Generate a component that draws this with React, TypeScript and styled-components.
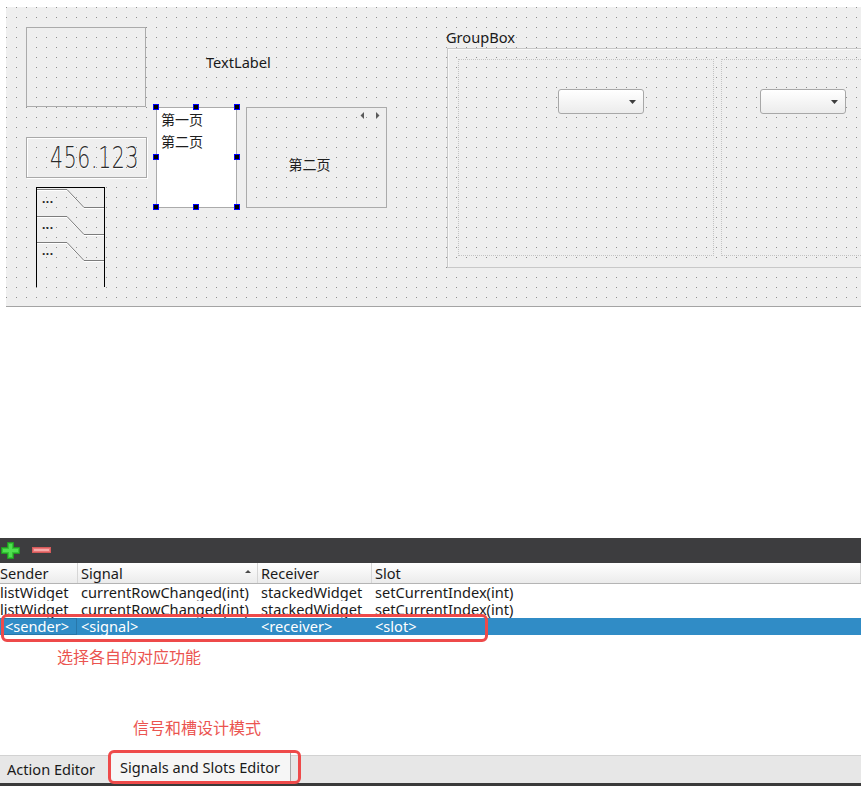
import React from "react";
import styled, { createGlobalStyle } from "styled-components";

const UI = `"Noto Sans", "Noto Sans CJK SC", sans-serif`;
const CJK = `"Noto Sans CJK SC", "Noto Sans", sans-serif`;
const RED = "#ee4a4a";
const FS = "14.6px";

const GlobalStyle = createGlobalStyle`
  html, body { margin: 0; padding: 0; background: #ffffff; }
  body { font-family: ${UI}; font-size: ${FS}; color: #1e1e1e; }
  * { box-sizing: border-box; }
`;

const Root = styled.div`
  position: relative;
  width: 861px;
  height: 786px;
  overflow: hidden;
  display: flex;
  flex-direction: column;
  background: #ffffff;
`;

/* ---------- designer canvas ---------- */
const CanvasArea = styled.div`
  flex: none;
  padding: 7px 0 0 6px;
`;

const Canvas = styled.div`
  position: relative;
  height: 300px;
  overflow: hidden;
  border-bottom: 1px solid #a4a4a4;
  background-color: #efefef;
  background-image: conic-gradient(at 1px 1px, transparent 270deg, #8f8f8f 270deg);
  background-size: 10px 10px;
`;

const EmptyFrame = styled.div`
  position: absolute;
  left: 20px;
  top: 20px;
  width: 120px;
  height: 80px;
  border: 1px solid #ababab;
`;

const TextLabel = styled.div`
  position: absolute;
  left: 200px;
  top: 45px;
  line-height: 20px;
  font-size: ${FS};
  color: #1a1a1a;
`;

const Lcd = styled.div`
  position: absolute;
  left: 20px;
  top: 130px;
  width: 121px;
  height: 41px;
  border: 1px solid #a9a9a9;
  box-shadow: inset 1px 1px 0 #ffffff, 1px 1px 0 #ffffff;
  display: flex;
  align-items: center;
  justify-content: flex-end;
  padding-right: 7px;
  overflow: hidden;
`;

const LcdText = styled.span`
  font-family: "DejaVu Sans", sans-serif;
  font-weight: 200;
  font-size: 31px;
  line-height: 31px;
  color: #2a2a2a;
  letter-spacing: 1px;
  transform: scaleX(0.66);
  transform-origin: right center;
  text-shadow: 1px 1px 0 #ffffff;
`;

const ToolBox = styled.div`
  position: absolute;
  left: 30px;
  top: 180px;
  width: 69px;
  height: 100px;
  display: flex;
  flex-direction: column;
  padding: 6px 0 0 6px;
  gap: 14px;
`;

const ToolBoxDots = styled.div`
  position: relative;
  font-size: 12px;
  font-weight: 700;
  line-height: 12px;
  color: #222;
  letter-spacing: 0.5px;
`;

const ListWrap = styled.div`
  position: absolute;
  left: 150px;
  top: 100px;
  width: 81px;
  height: 101px;
`;

const ListBox = styled.div`
  width: 100%;
  height: 100%;
  background: #ffffff;
  border: 1px solid #ababab;
  padding: 0 4px;
  font-family: ${CJK};
`;

const ListItem = styled.div`
  height: 22px;
  line-height: 22px;
  font-size: 14px;
  color: #1e1e1e;
`;

const Handle = styled.div<{ $x: number; $y: number }>`
  position: absolute;
  left: ${(p) => p.$x}px;
  top: ${(p) => p.$y}px;
  width: 6px;
  height: 6px;
  background: #000000;
  border: 1px solid #0000ff;
`;

const Stacked = styled.div`
  position: absolute;
  left: 240px;
  top: 100px;
  width: 141px;
  height: 101px;
  border: 1px solid #ababab;
  display: flex;
  align-items: center;
  justify-content: center;
  padding: 12px 14px 0 0;
  font-family: ${CJK};
  font-size: 14px;
  color: #1e1e1e;
`;

const StackArrows = styled.div`
  position: absolute;
  top: 4px;
  right: 6px;
  display: flex;
  gap: 10px;
`;

const GroupBox = styled.div`
  position: absolute;
  left: 440px;
  top: 21px;
  width: 460px;
  display: flex;
  flex-direction: column;
  gap: 2px;
`;

const GroupTitle = styled.div`
  line-height: 18px;
  font-size: ${FS};
  color: #1a1a1a;
`;

const GroupFrame = styled.div`
  margin-left: 1px;
  height: 220px;
  border: 1px solid #c8c8c8;
  box-shadow: inset 1px 1px 0 #f8f8f8;
  display: flex;
  gap: 7px;
  padding: 10px;
`;

const LayoutBox = styled.div<{ $width: number; $pad: number }>`
  flex: none;
  width: ${(p) => p.$width}px;
  height: 197px;
  border: 1px dotted #c4c4c4;
  padding: 29px 0 0 ${(p) => p.$pad}px;
`;

const Combo = styled.div`
  width: 86px;
  height: 25px;
  border: 1px solid #a8a8a8;
  border-radius: 3px;
  background: linear-gradient(#ffffff, #ececec);
  display: flex;
  align-items: center;
  justify-content: flex-end;
  padding-right: 7px;
`;

/* ---------- lower panel ---------- */
const Blank = styled.div`
  flex: none;
  height: 231px;
  background: #ffffff;
`;

const Toolbar = styled.div`
  flex: none;
  height: 25px;
  background: #3d3d3f;
  display: flex;
  align-items: center;
  gap: 12px;
  padding: 0 0 0 1px;
`;

const Grid = `
  display: grid;
  grid-template-columns: 81px 180px 114px 1fr;
  margin-left: -3px;
`;

const Header = styled.div`
  ${Grid}
  flex: none;
  height: 21px;
  background: linear-gradient(#ffffff, #ebebeb);
  border-bottom: 1px solid #b4b4b4;
`;

const HeadCell = styled.div`
  position: relative;
  padding-left: 3px;
  line-height: 20px;
  font-size: ${FS};
  color: #1a1a1a;
  border-right: 1px solid #d6d6d6;
  white-space: nowrap;
`;

const SortArrow = styled.span`
  position: absolute;
  right: 6px;
  top: 7px;
  width: 0;
  height: 0;
  border-left: 3px solid transparent;
  border-right: 3px solid transparent;
  border-bottom: 3px solid #4a4a4a;
`;

const Row = styled.div<{ $selected?: boolean }>`
  ${Grid}
  flex: none;
  height: 17px;
  position: ${(p) => (p.$selected ? "relative" : "static")};
  background: ${(p) => (p.$selected ? "#308cc6" : "#ffffff")};
  color: ${(p) => (p.$selected ? "#ffffff" : "#1a1a1a")};
`;

const Cell = styled.div<{ $editor?: boolean }>`
  padding-left: ${(p) => (p.$editor ? "2px" : "3px")};
  margin-left: ${(p) => (p.$editor ? "6px" : "0")};
  margin-right: ${(p) => (p.$editor ? "1px" : "0")};
  box-shadow: ${(p) => (p.$editor ? "inset 0 0 0 1px #2877aa" : "none")};
  line-height: 17px;
  font-size: ${FS};
  white-space: nowrap;
`;

const Fill = styled.div`
  flex: 1;
  background: #ffffff;
`;

const TabBar = styled.div`
  flex: none;
  height: 28px;
  background: #e7e7e7;
  border-top: 1px solid #d2d2d2;
  display: flex;
  align-items: flex-end;
`;

const Tab = styled.div<{ $active?: boolean }>`
  height: ${(p) => (p.$active ? "31px" : "27px")};
  margin-top: ${(p) => (p.$active ? "-4px" : "0")};
  margin-left: ${(p) => (p.$active ? "4px" : "0")};
  width: ${(p) => (p.$active ? "180px" : "107px")};
  padding-left: ${(p) => (p.$active ? "9px" : "7px")};
  padding-top: ${(p) => (p.$active ? "5px" : "3px")};
  background: ${(p) => (p.$active ? "#f6f6f6" : "#e7e7e7")};
  border-right: ${(p) => (p.$active ? "1px solid #a8a8a8" : "none")};
  font-size: ${FS};
  line-height: 20px;
  color: #1a1a1a;
  white-space: nowrap;
`;

const BottomEdge = styled.div`
  flex: none;
  height: 3px;
  background: #3a3a3a;
`;

/* ---------- annotations ---------- */
const RedBox = styled.div<{ $l: number; $t: number; $w: number; $h: number }>`
  position: absolute;
  left: ${(p) => p.$l}px;
  top: ${(p) => p.$t}px;
  width: ${(p) => p.$w}px;
  height: ${(p) => p.$h}px;
  border: 3px solid ${RED};
  border-radius: 6px;
  pointer-events: none;
`;

const Note = styled.div<{ $l: number; $t: number }>`
  position: absolute;
  left: ${(p) => p.$l}px;
  top: ${(p) => p.$t}px;
  font-family: ${CJK};
  font-size: 16px;
  line-height: 20px;
  color: #eb5450;
  white-space: nowrap;
`;

const ToolBoxDrawing = () => (
  <svg width="69" height="100" viewBox="0 0 69 100" style={{ position: "absolute", left: 0, top: 0 }}>
    <line x1="0.5" y1="0" x2="0.5" y2="100" stroke="#000" strokeWidth="1" />
    <line x1="68.5" y1="0" x2="68.5" y2="100" stroke="#000" strokeWidth="1" />
    <line x1="0" y1="0.5" x2="69" y2="0.5" stroke="#000" strokeWidth="1" />
    {[2.5, 29.5, 55.5].map((y) => (
      <g key={y}>
        <polyline
          points={`1,${y + 1} 31,${y + 1} 48,${y + 19} 68,${y + 19}`}
          fill="none"
          stroke="#ffffff"
          strokeWidth="1"
        />
        <polyline
          points={`1,${y} 31,${y} 48,${y + 18} 68,${y + 18}`}
          fill="none"
          stroke="#7d7d7d"
          strokeWidth="1"
        />
      </g>
    ))}
  </svg>
);

const ArrowLeft = () => (
  <svg width="5" height="7" viewBox="0 0 5 7">
    <polygon points="4,0 4,7 0.5,3.5" fill="#5a5a5a" />
  </svg>
);
const ArrowRight = () => (
  <svg width="5" height="7" viewBox="0 0 5 7">
    <polygon points="1,0 1,7 4.5,3.5" fill="#5a5a5a" />
  </svg>
);

const ComboArrow = () => (
  <svg width="7" height="4" viewBox="0 0 7 4">
    <polygon points="0,0 7,0 3.5,4" fill="#3e3e3e" />
  </svg>
);

const PlusIcon = () => (
  <svg width="19" height="17" viewBox="0 0 19 17">
    <path d="M6.5 0.5h6v5h6v6h-6v5h-6v-5h-6v-6h6z" fill="#36c236" stroke="#229a22" strokeWidth="1" />
    <path d="M8 2h3v5h6v3h-6v5h-3v-5h-6v-3h6z" fill="#4fe04f" />
  </svg>
);

const MinusIcon = () => (
  <svg width="19" height="17" viewBox="0 0 19 17">
    <rect x="0.5" y="5.5" width="18" height="5" fill="#e87474" stroke="#d45a5a" strokeWidth="1" />
    <rect x="2" y="7" width="15" height="2" fill="#f6a9a9" />
  </svg>
);

const rows = [
  ["listWidget", "currentRowChanged(int)", "stackedWidget", "setCurrentIndex(int)"],
  ["listWidget", "currentRowChanged(int)", "stackedWidget", "setCurrentIndex(int)"],
];

/* handle offsets relative to the selected list widget */
const handles: Array<[number, number]> = [
  [-3, -3], [37, -3], [78, -3],
  [-3, 47], [78, 47],
  [-3, 97], [37, 97], [78, 97],
];

export default function App() {
  return (
    <Root>
      <GlobalStyle />
      <CanvasArea>
        <Canvas>
          <EmptyFrame />
          <TextLabel>TextLabel</TextLabel>
          <Lcd>
            <LcdText>456.123</LcdText>
          </Lcd>
          <ToolBox>
            <ToolBoxDrawing />
            <ToolBoxDots>...</ToolBoxDots>
            <ToolBoxDots>...</ToolBoxDots>
            <ToolBoxDots>...</ToolBoxDots>
          </ToolBox>
          <ListWrap>
            <ListBox>
              <ListItem>第一页</ListItem>
              <ListItem>第二页</ListItem>
            </ListBox>
            {handles.map(([x, y]) => (
              <Handle key={`${x}-${y}`} $x={x} $y={y} />
            ))}
          </ListWrap>
          <Stacked>
            <StackArrows>
              <ArrowLeft />
              <ArrowRight />
            </StackArrows>
            第二页
          </Stacked>
          <GroupBox>
            <GroupTitle>GroupBox</GroupTitle>
            <GroupFrame>
              <LayoutBox $width={256} $pad={99}>
                <Combo>
                  <ComboArrow />
                </Combo>
              </LayoutBox>
              <LayoutBox $width={200} $pad={38}>
                <Combo>
                  <ComboArrow />
                </Combo>
              </LayoutBox>
            </GroupFrame>
          </GroupBox>
        </Canvas>
      </CanvasArea>

      <Blank />

      <Toolbar>
        <PlusIcon />
        <MinusIcon />
      </Toolbar>

      <Header>
        <HeadCell>Sender</HeadCell>
        <HeadCell>
          Signal
          <SortArrow />
        </HeadCell>
        <HeadCell>Receiver</HeadCell>
        <HeadCell>Slot</HeadCell>
      </Header>
      {rows.map((r, i) => (
        <Row key={i}>
          {r.map((c, j) => (
            <Cell key={j}>{c}</Cell>
          ))}
        </Row>
      ))}
      <Row $selected>
        <Cell $editor>&lt;sender&gt;</Cell>
        <Cell>&lt;signal&gt;</Cell>
        <Cell>&lt;receiver&gt;</Cell>
        <Cell>&lt;slot&gt;</Cell>
      </Row>
      <Fill />
      <TabBar>
        <Tab>Action Editor</Tab>
        <Tab $active>Signals and Slots Editor</Tab>
      </TabBar>
      <BottomEdge />

      <RedBox $l={1} $t={614} $w={487} $h={28} />
      <Note $l={57} $t={646}>选择各自的对应功能</Note>
      <Note $l={133} $t={717}>信号和槽设计模式</Note>
      <RedBox $l={108} $t={750} $w={193} $h={34} />
    </Root>
  );
}
